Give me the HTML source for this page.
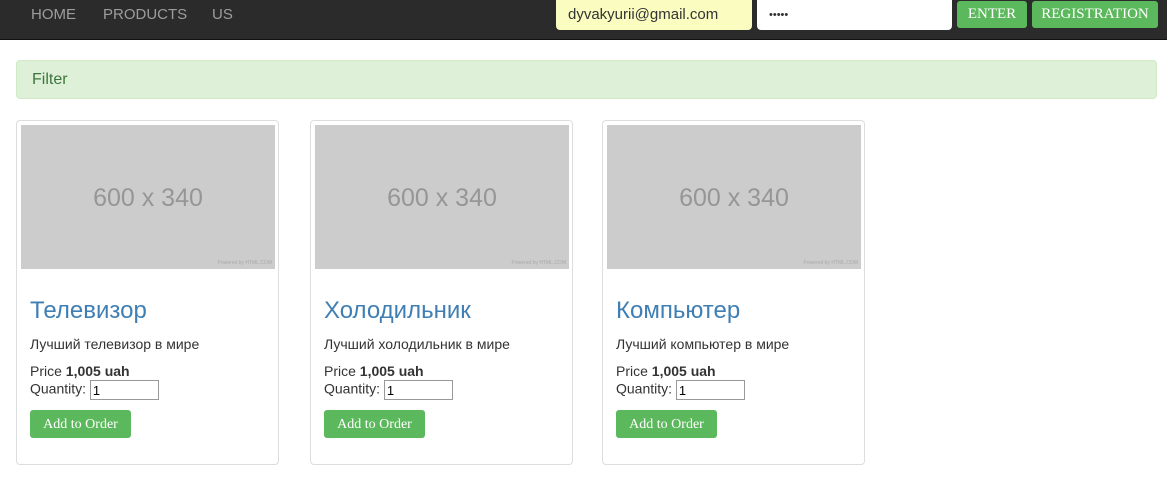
<!DOCTYPE html>
<html><head><meta charset="utf-8"><style>
body{margin:0;width:1167px;height:486px;background:#fff;font-family:"Liberation Sans",sans-serif;overflow:hidden;position:relative}
.nav{position:absolute;left:0;top:0;width:1167px;height:39px;background:#2a2b2a;border-bottom:1px solid #111}
.nav a{position:absolute;top:6px;color:#9d9d9d;font-size:15px}
.in{position:absolute;top:0;height:30px;border-radius:0 0 4px 4px;box-sizing:border-box;font-size:15px;padding:6px 12px;color:#333}
.btn{position:absolute;background:#5cb85c;color:#fff;font-family:"Liberation Serif",serif;border-radius:3px;text-align:center}
.filter{position:absolute;left:16px;top:60px;width:1141px;height:39px;background:#dff0d8;border:1px solid #d0e9c6;border-radius:4px;box-sizing:border-box;color:#3c763d;font-size:16px;padding:10px 15px}
.card{position:absolute;top:120px;width:263px;height:345px;border:1px solid #ddd;border-radius:4px;box-sizing:border-box}
.img{position:absolute;left:4px;top:4px;width:254px;height:144px;background:#ccc;color:#969696;font-size:25px;text-align:center;line-height:146px}
.img span{position:absolute;right:3px;bottom:3px;font-size:5px;line-height:5px;color:#aaa}
.t{position:absolute;left:13px;top:176px;font-size:24px;color:#3f7fb3}
.d{position:absolute;left:13px;top:215px;font-size:14px;color:#333}
.p{position:absolute;left:13px;top:242px;font-size:14px;color:#333;line-height:17px}
.p input{width:69px;height:20px;border:1px solid #999;font-size:13px;padding:0 2px;box-sizing:border-box;font-family:"Liberation Sans",sans-serif;vertical-align:middle}
.ab{left:13px;top:289px;width:101px;height:28px;line-height:29px;font-size:14px}
</style></head><body>
<div class="nav">
<a style="left:31px">HOME</a><a style="left:103px">PRODUCTS</a><a style="left:212px">US</a>
<div class="in" style="left:556px;width:196px;background:#fafcc0">dyvakyurii@gmail.com</div>
<div class="in" style="left:757px;width:195px;background:#fff;font-size:11px;padding-top:9px">&bull;&bull;&bull;&bull;&bull;</div>
<div class="btn" style="left:957px;top:1px;width:70px;height:27px;line-height:27px;font-size:15px">ENTER</div>
<div class="btn" style="left:1032px;top:1px;width:126px;height:27px;line-height:27px;font-size:15px">REGISTRATION</div>
</div>
<div class="filter">Filter</div>
<div class="card" style="left:16px"><div class="img">600 x 340<span>Powered by HTML.COM</span></div><div class="t">Телевизор</div><div class="d">Лучший телевизор в мире</div><div class="p">Price <b>1,005 uah</b><br>Quantity: <input value="1"></div><div class="btn ab">Add to Order</div></div>
<div class="card" style="left:310px"><div class="img">600 x 340<span>Powered by HTML.COM</span></div><div class="t">Холодильник</div><div class="d">Лучший холодильник в мире</div><div class="p">Price <b>1,005 uah</b><br>Quantity: <input value="1"></div><div class="btn ab">Add to Order</div></div>
<div class="card" style="left:602px"><div class="img">600 x 340<span>Powered by HTML.COM</span></div><div class="t">Компьютер</div><div class="d">Лучший компьютер в мире</div><div class="p">Price <b>1,005 uah</b><br>Quantity: <input value="1"></div><div class="btn ab">Add to Order</div></div>
</body></html>
